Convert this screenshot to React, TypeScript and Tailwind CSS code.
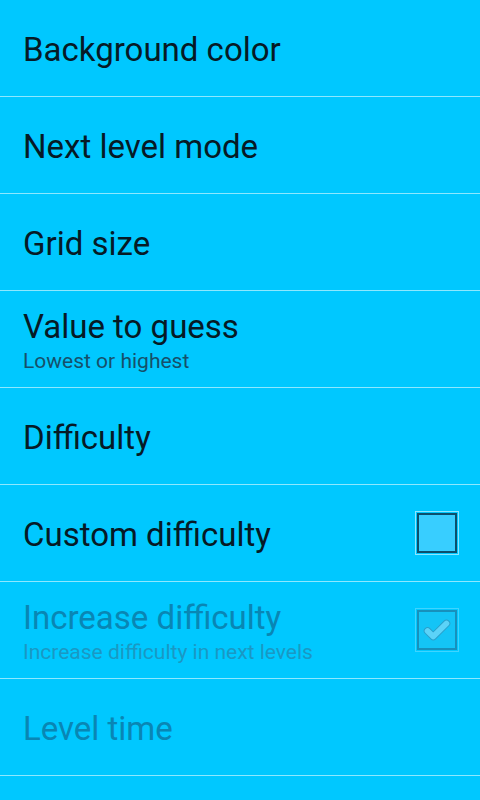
import React from 'react';

type Pref = {
  title: string;
  summary?: string;
  checkbox?: 'off' | 'on';
  disabled?: boolean;
};

const prefs: Pref[] = [
  { title: 'Background color' },
  { title: 'Next level mode' },
  { title: 'Grid size' },
  { title: 'Value to guess', summary: 'Lowest or highest' },
  { title: 'Difficulty' },
  { title: 'Custom difficulty', checkbox: 'off' },
  { title: 'Increase difficulty', summary: 'Increase difficulty in next levels', checkbox: 'on', disabled: true },
  { title: 'Level time', disabled: true },
];

const CheckBox: React.FC<{ checked: boolean; disabled?: boolean }> = ({ checked, disabled }) => (
  <div className={`w-[44px] h-[44px] border p-px ${disabled ? 'border-[#3fd4ff]' : 'border-[#8ee6ff]'}`}>
    <div
      className={`w-full h-full border-2 flex items-center justify-center ${
        disabled ? 'border-[#1790bc] bg-[#14c4f6]' : 'border-[#0b4f6c] bg-[#38ceff]'
      }`}
    >
      {checked && (
        <svg viewBox="0 0 36 36" className="w-[34px] h-[34px]">
          <path d="M8 19 L14 25 L28 11" fill="none" stroke="#2a9fca" strokeWidth="8" strokeLinecap="round" strokeLinejoin="round" />
          <path d="M8 19 L14 25 L28 11" fill="none" stroke="#5cd3f8" strokeWidth="6" strokeLinecap="round" strokeLinejoin="round" />
        </svg>
      )}
    </div>
  </div>
);

const App: React.FC = () => {
  return (
    <div className="w-[480px] h-[800px] overflow-hidden bg-[#00c8ff]" style={{ fontFamily: 'Roboto, "Noto Sans", sans-serif' }}>
      {prefs.map(p => (
        <div key={p.title}>
          <div className="h-[96px] flex items-center pl-[23px] pr-[21px]">
            <div className="flex-1 min-w-0 pt-[3px]">
              <div className={`text-[33px] leading-[38px] ${p.disabled ? 'text-[#0986b4]' : 'text-[#061a26]'}`}>{p.title}</div>
              {p.summary && (
                <div className={`mt-[2px] text-[21px] leading-[26px] ${p.disabled ? 'text-[#1a98c4]' : 'text-[#16506a]'}`}>{p.summary}</div>
              )}
            </div>
            {p.checkbox && <CheckBox checked={p.checkbox === 'on'} disabled={p.disabled} />}
          </div>
          <div className="h-px bg-[#8ee8ff]" />
        </div>
      ))}
    </div>
  );
};

export default App;
